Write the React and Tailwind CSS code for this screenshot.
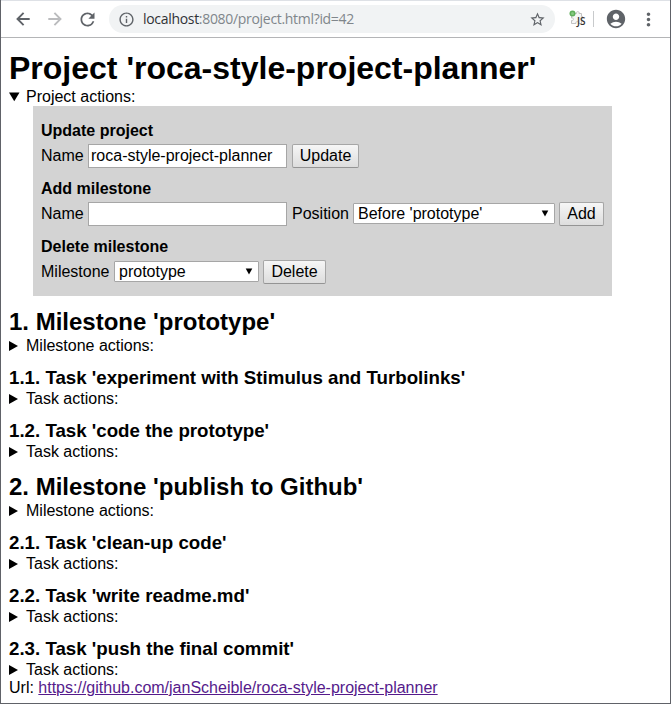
import React from "react";
import { MdRefresh, MdInfoOutline, MdStarBorder, MdAccountCircle, MdMoreVert } from "react-icons/md";

function ExtensionIcon() {
  return (
    <svg width="18" height="18" viewBox="0 0 18 18" className="block">
      <path d="M4.500 3.500h3c-1-2.500 3.500-2.500 2.500 0h2.500v3c2-1 2 3.500 0 2.500v4.500h-3c1-2.500-3.500-2.500-2.500 0h-4.500v-3c2.500 1 2.500-3.500 0-2.500v-4z" fill="#f7f7f7" stroke="#c2c2c2" strokeWidth="1" />
      <circle cx="3.500" cy="3.500" r="3" fill="#5fae5a" />
      <circle cx="3.500" cy="3.500" r="1.500" fill="#86c981" />
      <text x="8" y="14.500" fontFamily="Open Sans, sans-serif" fontSize="10" fontWeight="600" fill="#333">JS</text>
    </svg>
  );
}

function Arrow({ forward = false, className }) {
  return (
    <svg width="20" height="20" viewBox="0 0 20 20" className={className} fill="none" stroke="currentColor" strokeWidth="1.900">
      <path d={forward ? "M3.300 10H15.500M9.400 3.900L15.500 10L9.400 16.100" : "M16.700 10H4.500M10.600 3.900L4.500 10L10.600 16.100"} />
    </svg>
  );
}

function Toolbar() {
  return (
    <header className="flex h-[38px] shrink-0 items-center border-t border-b border-t-[#dee1e6] border-b-[#b4b5b7] bg-white text-[#5f6368]">
      <Arrow className="ml-[12px]" />
      <Arrow forward className="ml-[12px] text-[#bbbcbe]" />
      <MdRefresh className="ml-[12px] size-[21px]" />
      <div className="ml-[11px] flex h-7 w-[446px] items-center rounded-full bg-[#f1f3f4]">
        <MdInfoOutline className="ml-[9px] size-[17px]" />
        <span className="ml-[8px] font-['Open_Sans',sans-serif] text-[14px] leading-5 tracking-[-0.31px] whitespace-nowrap text-[#80868b]">
          <span className="text-[#303236]">localhost</span>:8080/project.html?id=42
        </span>
        <MdStarBorder className="mr-[9px] ml-auto size-[17px]" />
      </div>
      <div className="ml-[14px]"><ExtensionIcon /></div>
      <div className="ml-[6px] h-4 w-px bg-[#c8cacc]" />
      <MdAccountCircle className="ml-[11px] size-[22px]" />
      <MdMoreVert className="ml-[11px] size-[21px]" />
    </header>
  );
}

function Summary({ children, open = false }) {
  return (
    <div className="flex h-[18px] items-center text-[16px] leading-[18px]">
      <svg width="11" height="10" viewBox="0 0 11 10" className="mr-[6px] shrink-0">
        <path d={open ? "M0 .5H10.500L5.250 9.200Z" : "M0 0V10L9 5Z"} fill="#000" />
      </svg>
      <span>{children}</span>
    </div>
  );
}

function Button({ children, className }) {
  return (
    <button className={"h-6 shrink-0 rounded-[2px] border border-[#a6a6a6] border-b-[#949494] bg-linear-to-b from-[#f6f6f6] to-[#dddddd] pb-[1px] text-center text-[16px] leading-[21px] " + className}>
      {children}
    </button>
  );
}

function Select({ children, className }) {
  return (
    <div className={"mb-[2px] flex h-[21px] shrink-0 items-center justify-between rounded-[1px] border border-[#a6a6a6] bg-white pr-[5px] pl-1 leading-[19px] " + className}>
      <span>{children}</span>
      <svg width="8" height="7" viewBox="0 0 8 7"><path d="M.7 .5H7.300L4 6.500Z" fill="#000" /></svg>
    </div>
  );
}

function Field({ value, className = "" }) {
  return <input className={"h-6 w-[199px] shrink-0 border border-[#a6a6a6] bg-white px-[2px] text-[16px] outline-none " + className} defaultValue={value} />;
}

function FormGroup({ title, children }) {
  return (
    <section className="h-[58px]">
      <h4 className="h-[22px] text-[16px] leading-[18px] font-bold">{title}</h4>
      <div className="flex h-6 items-center whitespace-nowrap">{children}</div>
    </section>
  );
}

function Task({ title }) {
  return (
    <section className="pt-[12px]">
      <h3 className="mb-[2px] h-[21px] text-[18.72px] leading-[21px] font-bold">{title}</h3>
      <Summary>Task actions:</Summary>
    </section>
  );
}

function Milestone({ title, tasks }) {
  return (
    <section className="pt-[12px]">
      <h2 className="mb-[2px] h-[27px] text-[24px] leading-[27px] font-bold">{title}</h2>
      <Summary>Milestone actions:</Summary>
      {tasks.map((t) => <Task key={t} title={t} />)}
    </section>
  );
}

export default function App() {
  return (
    <div className="flex h-[704px] w-[671px] flex-col overflow-hidden border-r border-b border-l border-[#606268] bg-white font-['Liberation_Sans',Arial,sans-serif] text-[16px] leading-[18px] text-black">
      <Toolbar />
      <main className="px-2 pt-[12px]">
        <h1 className="h-[38px] text-[32px] leading-[36px] font-bold">Project 'roca-style-project-planner'</h1>
        <Summary open>Project actions:</Summary>
        <div className="ml-6 h-[190px] w-[579px] bg-[#d3d3d3] px-2 pt-4">
          <FormGroup title="Update project">
            <span className="w-[47px]">Name</span>
            <Field value="roca-style-project-planner" />
            <Button className="ml-[5px] w-[67px]">Update</Button>
          </FormGroup>
          <FormGroup title="Add milestone">
            <span className="w-[47px]">Name</span>
            <Field value="" />
            <span className="ml-[5px] w-[61px]">Position</span>
            <Select className="w-[202px]">Before 'prototype'</Select>
            <Button className="ml-[4px] w-[45px]">Add</Button>
          </FormGroup>
          <FormGroup title="Delete milestone">
            <span className="w-[73px]">Milestone</span>
            <Select className="w-[145px]">prototype</Select>
            <Button className="ml-[4px] w-[63px]">Delete</Button>
          </FormGroup>
        </div>
        <Milestone title="1. Milestone 'prototype'" tasks={["1.1. Task 'experiment with Stimulus and Turbolinks'", "1.2. Task 'code the prototype'"]} />
        <Milestone title="2. Milestone 'publish to Github'" tasks={["2.1. Task 'clean-up code'", "2.2. Task 'write readme.md'", "2.3. Task 'push the final commit'"]} />
        <p>
          Url: <a className="text-[#551a8b] underline">https://github.com/janScheible/roca-style-project-planner</a>
        </p>
      </main>
    </div>
  );
}
